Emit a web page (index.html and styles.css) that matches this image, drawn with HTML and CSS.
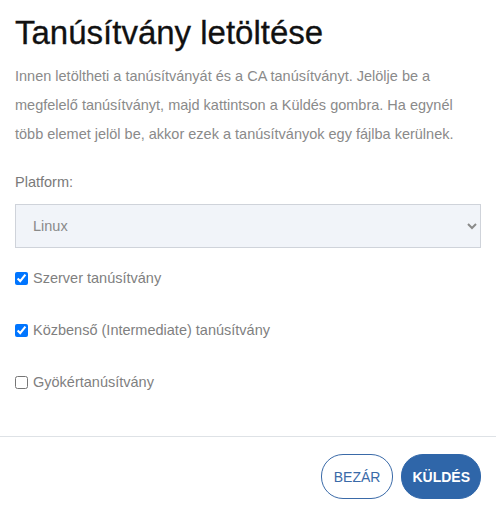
FILE: index.html
```html
<!DOCTYPE html>
<html lang="hu">
<head>
<meta charset="utf-8">
<title>Tanúsítvány letöltése</title>
<link rel="stylesheet" href="styles.css">
</head>
<body>
<div class="modal">
  <div class="modal-header">
    <h1 class="modal-title">Tanúsítvány letöltése</h1>
  </div>
  <div class="modal-body">
    <p class="intro">Innen letöltheti a tanúsítványát és a CA tanúsítványt. Jelölje be a megfelelő tanúsítványt, majd kattintson a Küldés gombra. Ha egynél több elemet jelöl be, akkor ezek a tanúsítványok egy fájlba kerülnek.</p>
    <div class="field">
      <label class="field-label" for="platform">Platform:</label>
      <select id="platform" class="form-select">
        <option>Linux</option>
        <option>Windows</option>
        <option>macOS</option>
      </select>
    </div>
    <div class="checks">
      <label class="check"><input type="checkbox" checked> <span>Szerver tanúsítvány</span></label>
      <label class="check"><input type="checkbox" checked> <span>Közbenső (Intermediate) tanúsítvány</span></label>
      <label class="check"><input type="checkbox"> <span>Gyökértanúsítvány</span></label>
    </div>
  </div>
  <div class="modal-footer">
    <button class="btn btn-outline" type="button">BEZÁR</button>
    <button class="btn btn-primary" type="button">KÜLDÉS</button>
  </div>
</div>
</body>
</html>
```
FILE: styles.css
```css
html, body {
  margin: 0;
  padding: 0;
  background: #ffffff;
}
body {
  font-family: "Liberation Sans", Arial, sans-serif;
  color: #888888;
}
.modal {
  width: 496px;
}
.modal-header {
  padding: 13px 15px 0;
}
.modal-title {
  margin: 0;
  font-family: "Liberation Sans", Arial, sans-serif;
  font-weight: normal;
  font-size: 33px;
  line-height: 40px;
  color: #111111;
  -webkit-text-stroke: 0.3px #111111;
}
.modal-body {
  padding: 9px 15px 20px;
}
.intro {
  margin: 0;
  font-size: 14.5px;
  line-height: 29px;
  color: #8a8a8a;
}
.field {
  margin-top: 23px;
}
.field-label {
  display: block;
  font-size: 14.5px;
  line-height: 20px;
  color: #7a7a7a;
  margin-bottom: 12px;
}
.form-select {
  display: block;
  width: 100%;
  height: 44px;
  box-sizing: border-box;
  padding: 0 13px;
  font-family: inherit;
  font-size: 14.5px;
  color: #8a8a8a;
  background-color: #f1f4f9;
  border: 1px solid #cfd3da;
  border-radius: 0;
}
.checks {
  margin-top: 20px;
  display: flex;
  flex-direction: column;
  gap: 32px;
}
.check {
  display: flex;
  align-items: center;
  gap: 5px;
  font-size: 14.5px;
  line-height: 20px;
  color: #7f7f7f;
}
.check input {
  margin: 0;
  width: 13px;
  height: 13px;
}
.modal-footer {
  margin-top: 24px;
  border-top: 1px solid #dee2e6;
  padding: 17px 15px;
  display: flex;
  justify-content: flex-end;
  gap: 8px;
}
.btn {
  height: 45px;
  padding: 0 12px;
  border-radius: 22px;
  font-family: "Liberation Sans", Arial, sans-serif;
  font-size: 14px;
  cursor: pointer;
  box-sizing: border-box;
}
.btn-outline {
  background: #ffffff;
  color: #3a6aa8;
  border: 1px solid #3a6aa8;
  font-weight: normal;
}
.btn-primary {
  padding: 0 10px;
  font-weight: bold;
  background: #2f66a9;
  color: #ffffff;
  border: 1px solid #2f66a9;
}
```
